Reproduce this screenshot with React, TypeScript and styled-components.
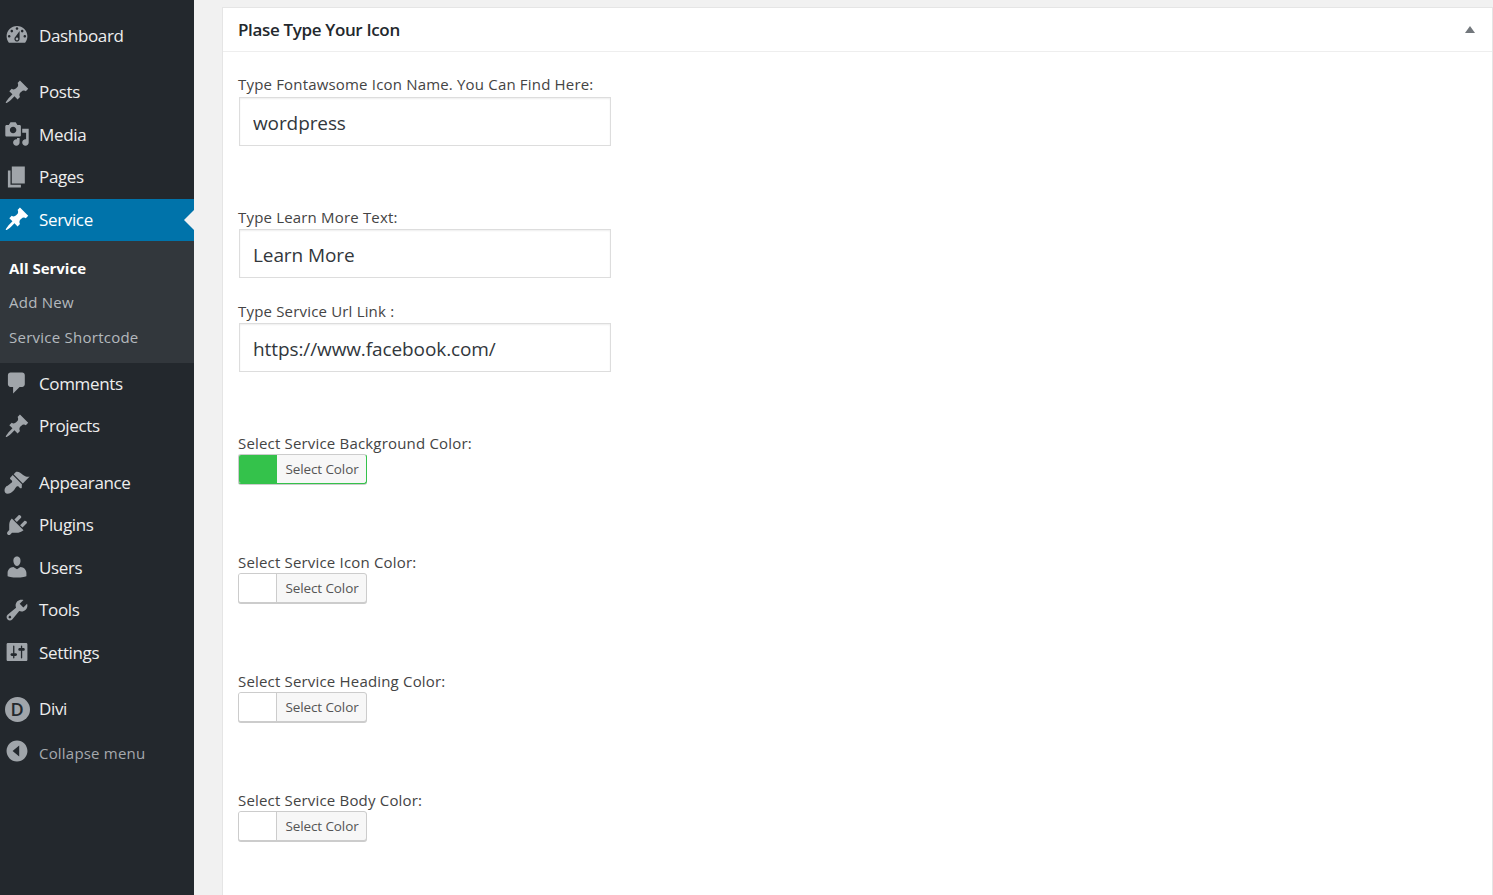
import styled, { createGlobalStyle } from 'styled-components';

const GlobalStyle = createGlobalStyle`
  html, body {
    margin: 0;
    padding: 0;
    height: 100%;
    overflow: hidden;
    background: #f1f1f1;
    font-family: "Open Sans", "Noto Sans", sans-serif;
  }
  * {
    box-sizing: border-box;
  }
`;

const paths: Record<string, string> = {
  dashboard:
    'M3.76 16h12.48c1.1-1.37 1.76-3.11 1.76-5 0-4.42-3.58-8-8-8s-8 3.58-8 8c0 1.89.66 3.63 1.76 5zM10 4c.55 0 1 .45 1 1s-.45 1-1 1-1-.45-1-1 .45-1 1-1zM6 6c.55 0 1 .45 1 1s-.45 1-1 1-1-.45-1-1 .45-1 1-1zm8 0c.55 0 1 .45 1 1s-.45 1-1 1-1-.45-1-1 .45-1 1-1zm-5.37 5.55L12 7v6c0 1.1-.9 2-2 2s-2-.9-2-2c0-.57.24-1.08.63-1.45zM4 10c.55 0 1 .45 1 1s-.45 1-1 1-1-.45-1-1 .45-1 1-1zm12 0c.55 0 1 .45 1 1s-.45 1-1 1-1-.45-1-1 .45-1 1-1zm-5 3c0-.55-.45-1-1-1s-1 .45-1 1 .45 1 1 1 1-.45 1-1z',
  pin: 'M10.44 3.02l1.82-1.82 6.36 6.35-1.83 1.82c-1.05-.68-2.48-.57-3.41.36l-.75.75c-.92.93-1.04 2.35-.35 3.41l-1.83 1.82-2.41-2.41-2.8 2.79c-.42.42-3.38 2.71-3.8 2.29s1.86-3.39 2.28-3.81l2.79-2.79L4.1 9.36l1.83-1.82c1.05.69 2.48.57 3.41-.36l.75-.75c.93-.92 1.04-2.35.35-3.41z',
  media:
    'M13 11V4c0-.55-.45-1-1-1h-1.67L9 1H5L3.67 3H2c-.55 0-1 .45-1 1v7c0 .55.45 1 1 1h10c.55 0 1-.45 1-1zM7 4.5c1.38 0 2.5 1.12 2.5 2.5S8.38 9.5 7 9.5 4.5 8.38 4.5 7 5.62 4.5 7 4.5zM14 6h5v10.5c0 1.38-1.12 2.5-2.5 2.5S14 17.88 14 16.5s1.12-2.5 2.5-2.5c.17 0 .34.02.5.05V9h-3V6zm-4 8.05V13h2v3.5c0 1.38-1.12 2.5-2.5 2.5S7 17.88 7 16.5 8.12 14 9.5 14c.17 0 .34.02.5.05z',
  pages: 'M6 15V2h10v13H6zm-1 1h8v2H3V5h2v11z',
  comments:
    'M5 2h9c1.1 0 2 .9 2 2v7c0 1.1-.9 2-2 2h-2l-5 5v-5H5c-1.1 0-2-.9-2-2V4c0-1.1.9-2 2-2z',
  appearance:
    'M14.48 11.06L7.41 3.99l1.5-1.5c.5-.56 2.3-.47 3.51.32 1.21.8 1.43 1.28 2.91 2.1 1.18.64 2.45 1.26 4.45.85zm-.71.71L6.7 4.7 4.93 6.47c-.39.39-.39 1.02 0 1.41l1.06 1.06c.39.39.39 1.03 0 1.42-.6.6-1.43 1.11-2.21 1.69-.35.26-.7.53-1.01.84C1.43 13.23.4 14.85.4 16.4s.8 2.7 2.3 2.7c1.55 0 3.17-1.03 4.52-2.38.31-.31.58-.66.84-1.01.58-.78 1.09-1.61 1.69-2.21.39-.39 1.03-.39 1.42 0l1.06 1.06c.39.39 1.02.39 1.41 0z',
  plugins:
    'M13.11 4.36L9.87 7.6 8 5.73l3.24-3.24c.35-.34 1.05-.2 1.56.32.52.51.66 1.21.31 1.55zm-8 1.77l.91-1.12 9.01 9.01-1.19.84c-.71.71-2.63 1.16-3.82 1.16H6.14L4.9 17.26c-.59.59-1.54.59-2.12 0-.59-.58-.59-1.53 0-2.12l1.24-1.24v-3.88c0-1.13.4-3.19 1.09-3.89zm7.26 3.97l3.24-3.24c.34-.35 1.04-.21 1.55.31.52.51.66 1.21.31 1.55l-3.24 3.25z',
  users:
    'M10 9.25c-2.27 0-2.73-3.44-2.73-3.44C7 4.02 7.82 2 9.97 2c2.16 0 2.98 2.02 2.71 3.81 0 0-.41 3.44-2.68 3.44zm0 2.57L12.72 10c2.39 0 4.52 2.33 4.52 4.53v2.49s-3.65 1.13-7.24 1.13c-3.65 0-7.24-1.13-7.24-1.13v-2.49c0-2.25 1.94-4.48 4.47-4.48z',
  tools:
    'M16.68 9.77c-1.34 1.34-3.3 1.67-4.95.99l-5.41 6.52c-.99.99-2.59.99-3.58 0s-.99-2.59 0-3.57l6.52-5.42c-.68-1.65-.35-3.61.99-4.95 1.28-1.28 3.12-1.62 4.72-1.06l-2.89 2.89 2.82 2.82 2.86-2.87c.53 1.58.18 3.39-1.08 4.65zM3.81 16.21c.4.39 1.04.39 1.43 0 .4-.4.4-1.04 0-1.43-.39-.4-1.03-.4-1.43 0-.39.39-.39 1.03 0 1.43z',
  settings:
    'M18 16V4c0-.55-.45-1-1-1H3c-.55 0-1 .45-1 1v12c0 .55.45 1 1 1h14c.55 0 1-.45 1-1zM8 11h1c.55 0 1 .45 1 1s-.45 1-1 1H8v1.5c0 .28-.22.5-.5.5s-.5-.22-.5-.5V13H6c-.55 0-1-.45-1-1s.45-1 1-1h1V5.5c0-.28.22-.5.5-.5s.5.22.5.5V11zm5-2h-1c-.55 0-1-.45-1-1s.45-1 1-1h1V5.5c0-.28.22-.5.5-.5s.5.22.5.5V7h1c.55 0 1 .45 1 1s-.45 1-1 1h-1v5.5c0 .28-.22.5-.5.5s-.5-.22-.5-.5V9z',
  collapse:
    'M10 .5c5.25 0 9.5 4.25 9.5 9.5s-4.25 9.5-9.5 9.5S.5 15.25.5 10 4.75.5 10 .5zm2 4.5l-6 5 6 5V5z',
};

function Icon({ name, active }: { name: string; active?: boolean }) {
  return (
    <IconSvg viewBox="0 0 20 20" $active={active}>
      <path fillRule="evenodd" d={paths[name]} />
    </IconSvg>
  );
}

export default function App() {
  return (
    <>
      <GlobalStyle />
      <Page>
        <Sidebar>
          <MenuItem $gap>
            <Icon name="dashboard" />
            <MenuText>Dashboard</MenuText>
          </MenuItem>
          <MenuItem>
            <Icon name="pin" />
            <MenuText>Posts</MenuText>
          </MenuItem>
          <MenuItem>
            <Icon name="media" />
            <MenuText>Media</MenuText>
          </MenuItem>
          <MenuItem>
            <Icon name="pages" />
            <MenuText>Pages</MenuText>
          </MenuItem>
          <ActiveItem>
            <Icon name="pin" active />
            <MenuText>Service</MenuText>
          </ActiveItem>
          <SubMenu>
            <SubItem $current>All Service</SubItem>
            <SubItem>Add New</SubItem>
            <SubItem>Service Shortcode</SubItem>
          </SubMenu>
          <MenuItem>
            <Icon name="comments" />
            <MenuText>Comments</MenuText>
          </MenuItem>
          <MenuItem $gap>
            <Icon name="pin" />
            <MenuText>Projects</MenuText>
          </MenuItem>
          <MenuItem>
            <Icon name="appearance" />
            <MenuText>Appearance</MenuText>
          </MenuItem>
          <MenuItem>
            <Icon name="plugins" />
            <MenuText>Plugins</MenuText>
          </MenuItem>
          <MenuItem>
            <Icon name="users" />
            <MenuText>Users</MenuText>
          </MenuItem>
          <MenuItem>
            <Icon name="tools" />
            <MenuText>Tools</MenuText>
          </MenuItem>
          <MenuItem $gap>
            <Icon name="settings" />
            <MenuText>Settings</MenuText>
          </MenuItem>
          <MenuItem>
            <DiviBadge>D</DiviBadge>
            <MenuText>Divi</MenuText>
          </MenuItem>
          <CollapseItem>
            <CollapseIcon viewBox="0 0 20 20">
              <path fillRule="evenodd" d={paths.collapse} />
            </CollapseIcon>
            <CollapseText>Collapse menu</CollapseText>
          </CollapseItem>
        </Sidebar>
        <Content>
          <Card>
            <CardHeader>
              <CardTitle>Plase Type Your Icon</CardTitle>
              <Arrow />
            </CardHeader>
            <CardBody>
              <Field $after={61}>
                <Label $height={23}>Type Fontawsome Icon Name. You Can Find Here:</Label>
                <TextInput readOnly value="wordpress" />
              </Field>
              <Field $after={23}>
                <Label $height={22}>Type Learn More Text:</Label>
                <TextInput readOnly value="Learn More" />
              </Field>
              <Field $after={61}>
                <Label $height={22}>Type Service Url Link :</Label>
                <TextInput readOnly value="https://www.facebook.com/" />
              </Field>
              <Field $after={68}>
                <Label $height={21}>Select Service Background Color:</Label>
                <ColorButton $color="#34c24b">
                  <Swatch $color="#34c24b" />
                  <ColorText>Select Color</ColorText>
                </ColorButton>
              </Field>
              <Field $after={68}>
                <Label $height={21}>Select Service Icon Color:</Label>
                <ColorButton>
                  <Swatch />
                  <ColorText>Select Color</ColorText>
                </ColorButton>
              </Field>
              <Field $after={68}>
                <Label $height={21}>Select Service Heading Color:</Label>
                <ColorButton>
                  <Swatch />
                  <ColorText>Select Color</ColorText>
                </ColorButton>
              </Field>
              <Field $after={0}>
                <Label $height={21}>Select Service Body Color:</Label>
                <ColorButton>
                  <Swatch />
                  <ColorText>Select Color</ColorText>
                </ColorButton>
              </Field>
            </CardBody>
          </Card>
        </Content>
      </Page>
    </>
  );
}

const Page = styled.div`
  display: flex;
  width: 100%;
  height: 895px;
`;

const Sidebar = styled.nav`
  width: 194px;
  flex: none;
  background: #23282d;
  padding-top: 15px;
`;

const MenuItem = styled.div<{ $gap?: boolean }>`
  display: flex;
  align-items: center;
  height: 42.5px;
  margin-bottom: ${(p) => (p.$gap ? '14px' : '0')};
  padding-left: 3.5px;
  color: #eee;
`;

const ActiveItem = styled(MenuItem)`
  position: relative;
  height: 42px;
  background: #0073aa;
  color: #fff;

  &::after {
    content: '';
    position: absolute;
    right: 0;
    top: 50%;
    margin-top: -10px;
    border: 10px solid transparent;
    border-left: 0;
    border-right-color: #f1f1f1;
  }
`;

const CollapseItem = styled(MenuItem)`
  height: 44px;
`;

const IconSvg = styled.svg<{ $active?: boolean }>`
  width: 26px;
  height: 26px;
  flex: none;
  margin-top: -2px;
  fill: ${(p) => (p.$active ? '#fff' : '#a0a5aa')};
`;

const CollapseIcon = styled.svg`
  width: 22px;
  height: 22px;
  flex: none;
  margin: -5px 2px 0;
  fill: #a0a5aa;
`;

const MenuText = styled.span`
  margin-left: 9.5px;
  margin-top: -2px;
  font-size: 17px;
  letter-spacing: -0.35px;
  white-space: nowrap;
`;

const CollapseText = styled(MenuText)`
  margin-top: -1px;
  font-size: 15px;
  letter-spacing: 0.2px;
  color: #a5a9ad;
`;

const DiviBadge = styled.span`
  width: 25px;
  height: 25px;
  flex: none;
  margin-left: 1px;
  border-radius: 50%;
  background: #a0a5aa;
  color: #23282d;
  font-size: 18px;
  font-weight: 600;
  line-height: 25px;
  text-align: center;
`;

const SubMenu = styled.div`
  display: flex;
  flex-direction: column;
  height: 122px;
  padding-top: 9.5px;
  background: #32373c;
`;

const SubItem = styled.div<{ $current?: boolean }>`
  height: 34.5px;
  padding-left: 9px;
  line-height: 34.5px;
  font-size: 15px;
  letter-spacing: ${(p) => (p.$current ? '0' : '0.25px')};
  white-space: nowrap;
  font-weight: ${(p) => (p.$current ? 700 : 400)};
  color: ${(p) => (p.$current ? '#fff' : '#b4b9be')};
`;

const Content = styled.main`
  flex: 1;
  min-width: 0;
  padding: 7px 0 0 28px;
  background: #f1f1f1;
`;

const Card = styled.section`
  width: 1271px;
  height: 900px;
  background: #fff;
  border: 1px solid #e5e5e5;
`;

const CardHeader = styled.header`
  display: flex;
  align-items: center;
  justify-content: space-between;
  height: 44px;
  padding: 0 17px 0 15px;
  border-bottom: 1px solid #eee;
`;

const CardTitle = styled.h2`
  margin: 0;
  font-size: 17px;
  font-weight: 600;
  letter-spacing: -0.35px;
  color: #23282d;
`;

const Arrow = styled.span`
  width: 0;
  height: 0;
  border-left: 5px solid transparent;
  border-right: 5px solid transparent;
  border-bottom: 7px solid #72777c;
`;

const CardBody = styled.div`
  display: flex;
  flex-direction: column;
  padding: 22px 15px 0;
`;

const Field = styled.div<{ $after: number }>`
  display: flex;
  flex-direction: column;
  align-items: flex-start;
  margin-bottom: ${(p) => p.$after}px;
`;

const Label = styled.label<{ $height: number }>`
  height: ${(p) => p.$height}px;
  line-height: 21px;
  font-size: 15px;
  letter-spacing: 0.18px;
  color: #444;
  white-space: nowrap;
`;

const TextInput = styled.input`
  width: 372px;
  height: 49px;
  margin-left: 1px;
  padding: 2px 13px 0;
  border: 1px solid #ddd;
  box-shadow: inset 0 1px 2px rgba(0, 0, 0, 0.07);
  background: #fff;
  color: #32373c;
  font-family: inherit;
  font-size: 19px;
  letter-spacing: -0.1px;
  outline: none;
`;

const ColorButton = styled.div<{ $color?: string }>`
  display: flex;
  width: 129px;
  height: 30px;
  overflow: hidden;
  border: 1px solid #ccc;
  border-right-color: ${(p) => p.$color ?? '#ccc'};
  border-bottom-color: ${(p) => p.$color ?? '#ccc'};
  border-radius: 3px;
  box-shadow: 0 1px 0 #ccc;
  background: #f7f7f7;
`;

const Swatch = styled.span<{ $color?: string }>`
  width: 38px;
  flex: none;
  background: ${(p) => p.$color ?? '#fff'};
  border-right: 1px solid ${(p) => p.$color ?? '#ccc'};
`;

const ColorText = styled.span`
  flex: 1;
  padding-left: 1px;
  text-align: center;
  line-height: 29px;
  font-size: 13.5px;
  letter-spacing: -0.1px;
  color: #555;
  white-space: nowrap;
`;
